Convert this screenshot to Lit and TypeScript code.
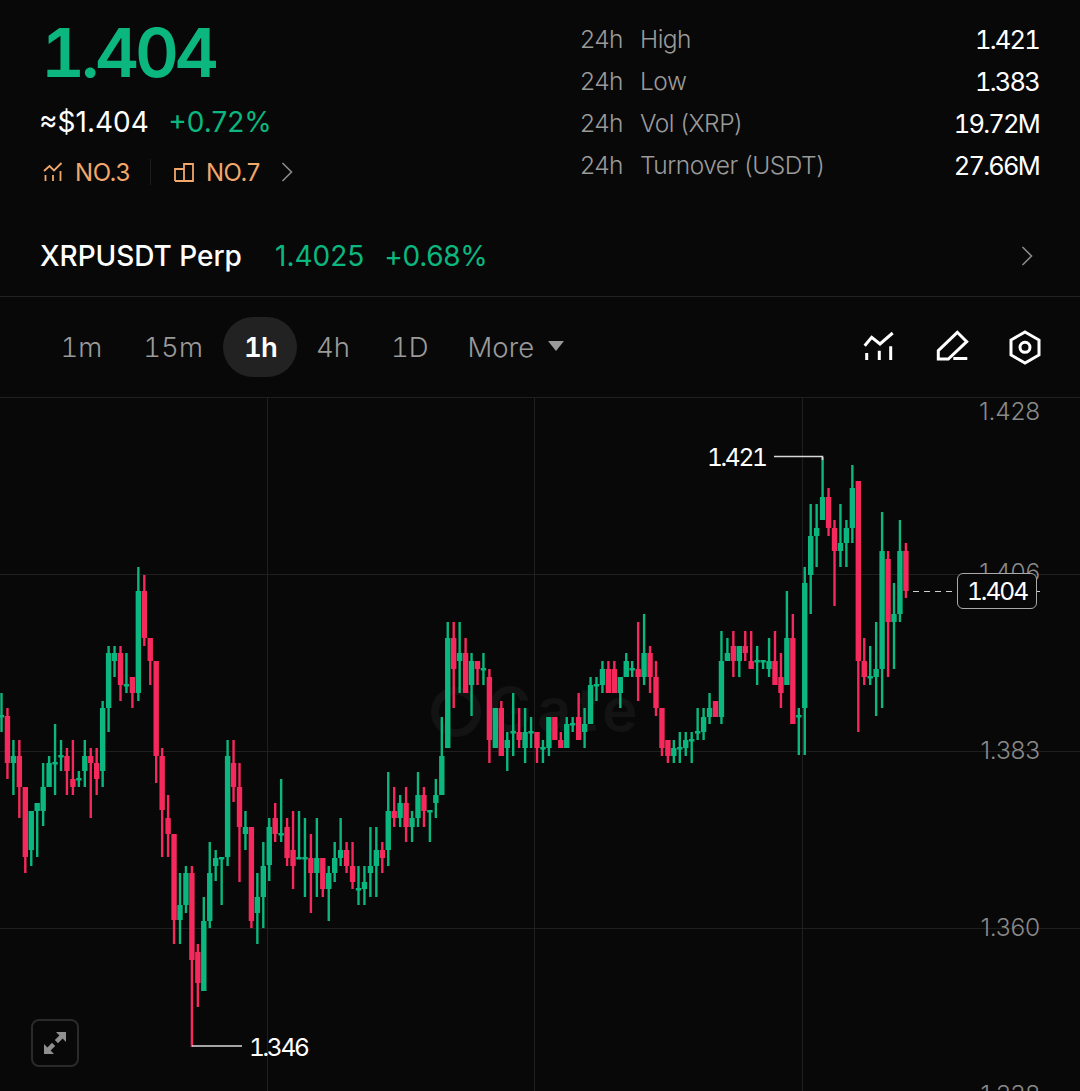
import { LitElement, html, svg, css } from 'lit';
import { customElement } from 'lit/decorators.js';

// candle rows: up(1)/down(0), wick top, body top, body bottom, wick bottom (page y)
const CANDLES: number[][] = [
  [1,693,715,717,732],[0,708,716,763,779],[1,740,756,763,795],[0,740,756,787,818],[0,787,787,857,873],
  [1,811,811,850,866],[1,803,803,811,857],[1,763,787,811,826],[1,756,763,787,787],[1,724,762,764,795],
  [1,740,755,757,771],[0,748,756,771,795],[0,740,779,787,795],[1,771,778,780,787],[1,740,756,771,787],
  [0,748,756,763,818],[0,748,763,779,795],[1,701,708,771,787],[1,646,653,708,732],[1,646,653,661,677],
  [0,646,653,685,701],[1,653,684,686,693],[0,677,677,693,708],[1,567,591,693,701],[0,575,591,638,646],
  [0,638,638,661,685],[0,661,661,756,783],[0,748,756,810,857],[0,795,818,834,857],[0,834,834,920,944],
  [1,873,905,920,944],[1,866,873,905,913],[0,866,873,960,1047],[0,944,952,983,1007],[1,897,921,991,991],
  [1,842,873,921,928],[1,850,858,866,881],[1,857,857,859,905],[1,740,756,857,866],[0,740,763,787,802],
  [0,763,787,827,882],[1,811,827,834,850],[0,827,827,921,928],[1,873,897,913,944],[1,842,866,897,928],
  [1,818,827,865,881],[0,803,818,834,842],[1,779,833,835,842],[0,818,827,858,866],[0,811,850,866,889],
  [1,811,857,859,858],[1,818,857,859,897],[0,834,858,873,913],[1,818,858,873,897],[0,858,858,889,897],
  [1,866,873,889,921],[1,842,858,873,882],[1,818,850,858,866],[0,842,850,866,873],[0,842,866,882,889],
  [1,866,888,890,905],[1,866,882,889,905],[1,827,866,873,897],[1,827,850,866,897],[0,842,850,858,873],
  [1,772,811,850,866],[0,787,811,818,827],[1,795,803,818,827],[0,787,803,827,842],[1,811,818,827,842],
  [1,772,795,818,827],[0,787,795,811,827],[1,811,810,812,842],[1,779,795,803,818],[1,717,756,795,795],
  [1,622,638,748,748],[0,622,638,669,708],[1,622,653,661,693],[0,638,653,693,693],[1,653,661,685,716],
  [0,661,661,669,685],[1,653,668,670,685],[0,669,677,740,763],[1,708,708,748,748],[0,701,708,756,756],
  [1,732,740,748,771],[1,693,731,733,756],[0,708,732,740,748],[1,708,732,748,763],[1,717,731,733,748],
  [0,732,732,748,763],[1,740,747,749,763],[1,717,717,748,756],[0,717,717,740,740],[0,732,740,748,748],
  [1,717,724,748,748],[1,717,723,725,732],[0,693,717,740,740],[1,708,724,732,748],[1,677,685,724,724],
  [1,677,684,686,701],[1,661,669,685,693],[0,661,669,693,693],[0,661,669,693,693],[1,677,677,693,708],
  [1,653,661,677,677],[1,661,668,670,677],[0,622,669,677,701],[1,614,653,677,685],[0,646,653,677,693],
  [0,661,677,708,716],[0,708,708,748,756],[0,740,740,756,763],[1,740,748,756,763],[1,732,747,749,763],
  [1,732,740,748,756],[1,732,739,741,763],[1,708,731,733,740],[1,708,717,732,740],[1,693,708,717,724],
  [0,701,701,717,717],[1,631,661,717,724],[1,638,653,661,661],[0,631,646,661,677],[1,646,646,661,677],
  [0,631,646,653,661],[0,631,661,669,669],[1,646,660,662,685],[1,661,660,662,669],[1,638,661,669,677],
  [0,631,661,685,685],[0,653,677,693,708],[1,591,638,685,685],[0,614,638,724,724],[1,708,715,717,755],
  [1,567,583,708,755],[1,504,536,575,614],[1,504,528,536,567],[1,457,497,520,520],[0,488,497,528,536],
  [0,520,528,551,606],[1,504,543,551,567],[1,520,528,543,567],[1,465,488,528,543],[0,481,481,661,732],
  [0,638,661,677,685],[1,646,676,678,685],[1,622,669,677,716],[1,512,551,669,708],[0,551,559,622,677],
  [1,583,614,622,669],[1,520,551,614,622],[0,543,551,591,598],
];

const STATS = [
  ['High', '1.421'],
  ['Low', '1.383'],
  ['Vol (XRP)', '19.72M'],
  ['Turnover (USDT)', '27.66M'],
];

const TABS = ['1m', '15m', '1h', '4h', '1D'];

@customElement('app-root')
export class AppRoot extends LitElement {
  static styles = css`
    :host {
      display: block;
      width: 1080px;
      height: 1091px;
      overflow: hidden;
      background: #080808;
      color: #fff;
      font-family: Inter, "Liberation Sans", sans-serif;
    }
    .top {
      display: flex;
      justify-content: space-between;
      padding: 0 40px;
      height: 216px;
    }
    .price {
      font-size: 68px;
      line-height: 76px;
      margin: 14px 0 0 1px;
      font-weight: 600;
      font-variant-numeric: tabular-nums;
      letter-spacing: -4.1px;
      color: #0bb77e;
    }
    .sub {
      display: flex;
      gap: 19.5px;
      margin: 12px 0 0 -1px;
      font-size: 28px;
      line-height: 40px;
      font-weight: 400;
    }
    .up { color: #0bb77e; }
    .rank {
      display: flex;
      align-items: center;
      margin: 10px 0 0 3px;
      height: 40px;
      font-size: 24px;
      letter-spacing: -0.4px;
      color: #f2a76b;
    }
    .rank svg { display: block; }
    .rank span { margin-left: 12px; }
    .sep {
      width: 1px;
      height: 26px;
      background: #1c1c1c;
      margin: 0 23px 0 20px;
    }
    .rank .chev { margin-left: 21px; }
    .stats {
      display: grid;
      grid-template-columns: 60px 1fr auto;
      grid-auto-rows: 42px;
      width: 461px;
      margin: 18px -1px 0 0;
      align-items: center;
      align-content: start;
      font-size: 24.5px;
      letter-spacing: -0.5px;
      font-weight: 300;
      color: #9a9a9a;
    }
    .val {
      color: #fff;
      font-weight: 400;
      font-size: 25.5px;
      font-variant-numeric: tabular-nums;
      letter-spacing: -1.8px;
      margin-right: 2px;
      text-align: right;
    }
    .perp {
      display: flex;
      align-items: center;
      height: 80px;
      padding: 0 40px;
      border-bottom: 1px solid #222;
      font-size: 28px;
    }
    .perp .name { font-weight: 500; width: 235px; letter-spacing: -0.05px; }
    .perp .chg { margin-left: 20px; letter-spacing: -0.3px; }
    .perp svg { margin-left: auto; margin-right: 7px; }
    .tools {
      display: flex;
      align-items: center;
      height: 100px;
      padding: 0 37px 0 40px;
      box-sizing: border-box;
    }
    .tab {
      padding: 0 20.5px;
      height: 60px;
      line-height: 60px;
      border-radius: 30px;
      font-size: 27.5px;
      font-variant-numeric: tabular-nums;
      font-weight: 300;
      color: #9a9a9a;
    }
    .tab.on {
      background: #222;
      color: #fff;
      font-weight: 600;
      letter-spacing: -0.8px;
      margin-right: -2px;
    }
    .more {
      display: flex;
      align-items: center;
      gap: 14px;
      margin-left: -2px;
      letter-spacing: 0.1px;
    }
    .more i {
      width: 0;
      height: 0;
      border-left: 8px solid transparent;
      border-right: 8px solid transparent;
      border-top: 10px solid #9a9a9a;
      margin-top: -3px;
    }
    .icons {
      display: flex;
      gap: 37px;
      margin-left: auto;
    }
    .icons svg {
      display: block;
      fill: none;
      stroke: #fff;
      stroke-width: 3;
    }
    .chart {
      position: relative;
      height: 694px;
    }
    .chart > svg {
      display: block;
    }
    .grid { stroke: #1f1f1f; stroke-width: 1; }
    .wm { fill: #131313; font-size: 60px; font-weight: 600; letter-spacing: 5px; }
    .ring { fill: none; stroke: #131313; stroke-width: 8; }
    .ax { fill: #8a8a8a; font-size: 24.5px; font-weight: 300; letter-spacing: -0.2px; text-anchor: end; }
    .note { fill: #fff; font-size: 24.5px; font-weight: 400; letter-spacing: -2.3px; font-variant-numeric: tabular-nums; }
    .lead { stroke: #d8d8d8; stroke-width: 1.5; fill: none; }
    .dash { stroke: #cfcfcf; stroke-width: 1; stroke-dasharray: 6 5; }
    .tag {
      position: absolute;
      left: 957px;
      top: 176px;
      width: 80px;
      height: 36px;
      box-sizing: border-box;
      border: 1.5px solid #aaa;
      border-radius: 6px;
      background: #080808;
      text-align: center;
      line-height: 34px;
      font-size: 24.5px;
      letter-spacing: -2px;
      font-variant-numeric: tabular-nums;
    }
    .expand {
      position: absolute;
      left: 31px;
      top: 622px;
      width: 48px;
      height: 48px;
      box-sizing: border-box;
      border: 2px solid #2a2a2a;
      border-radius: 8px;
      display: flex;
      align-items: center;
      justify-content: center;
    }
  `;

  candle(c: number[], i: number) {
    const x = 1.5 + 5.95 * i;
    const fill = c[0] ? '#0bb77e' : '#f5295c';
    const h = Math.max(c[3] - c[2], 2.5);
    return svg`
      <rect x=${x - 1.2} y=${c[1]} width="2.4" height=${c[4] - c[1]} fill=${fill}></rect>
      <rect x=${x - 2.7} y=${c[2]} width="5.4" height=${h} fill=${fill}></rect>`;
  }

  render() {
    return html`
      <div class="top">
        <div>
          <div class="price">1.404</div>
          <div class="sub"><span>≈$1.404</span><span class="up">+0.72%</span></div>
          <div class="rank">
            <svg width="20" height="20" viewBox="0 0 20 20" fill="none" stroke="#f2a76b" stroke-width="1.8">
              <path d="M1 9 L6.5 4 L11 8.5 L18.5 1"></path>
              <path d="M2.5 13v6M10 13v6M17.5 9v10"></path>
            </svg>
            <span>NO.3</span>
            <div class="sep"></div>
            <svg width="20" height="20" viewBox="0 0 20 20" fill="none" stroke="#f2a76b" stroke-width="1.8">
              <path d="M1 19V7H10M10 19V2H19V19H1"></path>
            </svg>
            <span>NO.7</span>
            <svg class="chev" width="12" height="20" viewBox="0 0 12 20" fill="none" stroke="#8a8a8a" stroke-width="1.6">
              <path d="M1.5 1 L10.5 10 L1.5 19"></path>
            </svg>
          </div>
        </div>
        <div class="stats">
          ${STATS.map(
            (s) => html`<span>24h</span><span>${s[0]}</span><span class="val">${s[1]}</span>`
          )}
        </div>
      </div>
      <div class="perp">
        <span class="name">XRPUSDT Perp</span>
        <span class="up">1.4025</span>
        <span class="up chg">+0.68%</span>
        <svg width="12" height="20" viewBox="0 0 12 20" fill="none" stroke="#8a8a8a" stroke-width="1.6">
          <path d="M1.5 1 L10.5 10 L1.5 19"></path>
        </svg>
      </div>
      <div class="tools">
        ${TABS.map((t) => html`<div class="tab ${t === '1h' ? 'on' : ''}">${t}</div>`)}
        <div class="tab more">More<i></i></div>
        <div class="icons">
          <svg width="36" height="36" viewBox="0 0 36 36">
            <path d="M3.7 16.7 L10.7 8.3 L19 15 L31.7 4"></path>
            <path d="M5.7 24v7M18.3 21.7V31M29.7 17.3V31"></path>
          </svg>
          <svg width="36" height="36" viewBox="0 0 36 36">
            <path d="M4.3 30V21.7L23.3 3.3L32.7 12.7L14.3 30Z"></path>
            <path d="M19.3 29.5H33.3"></path>
          </svg>
          <svg width="36" height="36" viewBox="0 0 36 36">
            <path d="M18 3L32 11V26L18 34L4 26V11Z"></path>
            <circle cx="18" cy="18.3" r="5"></circle>
          </svg>
        </div>
      </div>
      <div class="chart">
        <svg width="1080" height="694" viewBox="0 397 1080 694">
          <path class="grid" d="M0 397.5H1080M0 574.5H1080M0 751.5H1080M0 928.5H1080M267.5 397V1091M534.5 397V1091M802.5 397V1091"></path>
          <circle class="ring" cx="456" cy="712" r="21"></circle>
          <text class="wm" x="487" y="731">Gate</text>
          <text class="ax" x="1040" y="420">1.428</text>
          <text class="ax" x="1040" y="581">1.406</text>
          <text class="ax" x="1040" y="759">1.383</text>
          <text class="ax" x="1040" y="936">1.360</text>
          <text class="ax" x="1040" y="1103">1.338</text>
          ${CANDLES.map((c, i) => this.candle(c, i))}
          <path class="lead" d="M774 456.5H822.5V460"></path>
          <text class="note" x="707" y="466">1.421</text>
          <path class="lead" d="M192 1046H242"></path>
          <text class="note" x="249" y="1056">1.346</text>
          <path class="dash" d="M913 591.5H1040"></path>
        </svg>
        <div class="tag">1.404</div>
        <div class="expand">
          <svg width="26" height="26" viewBox="0 0 26 26" fill="#8f8f8f">
            <path d="M14 2H24V12L20.6 8.6L16 13.2L12.8 10L17.4 5.4Z"></path>
            <path d="M12 24H2V14L5.4 17.4L10 12.8L13.2 16L8.6 20.6Z"></path>
          </svg>
        </div>
      </div>
    `;
  }
}
